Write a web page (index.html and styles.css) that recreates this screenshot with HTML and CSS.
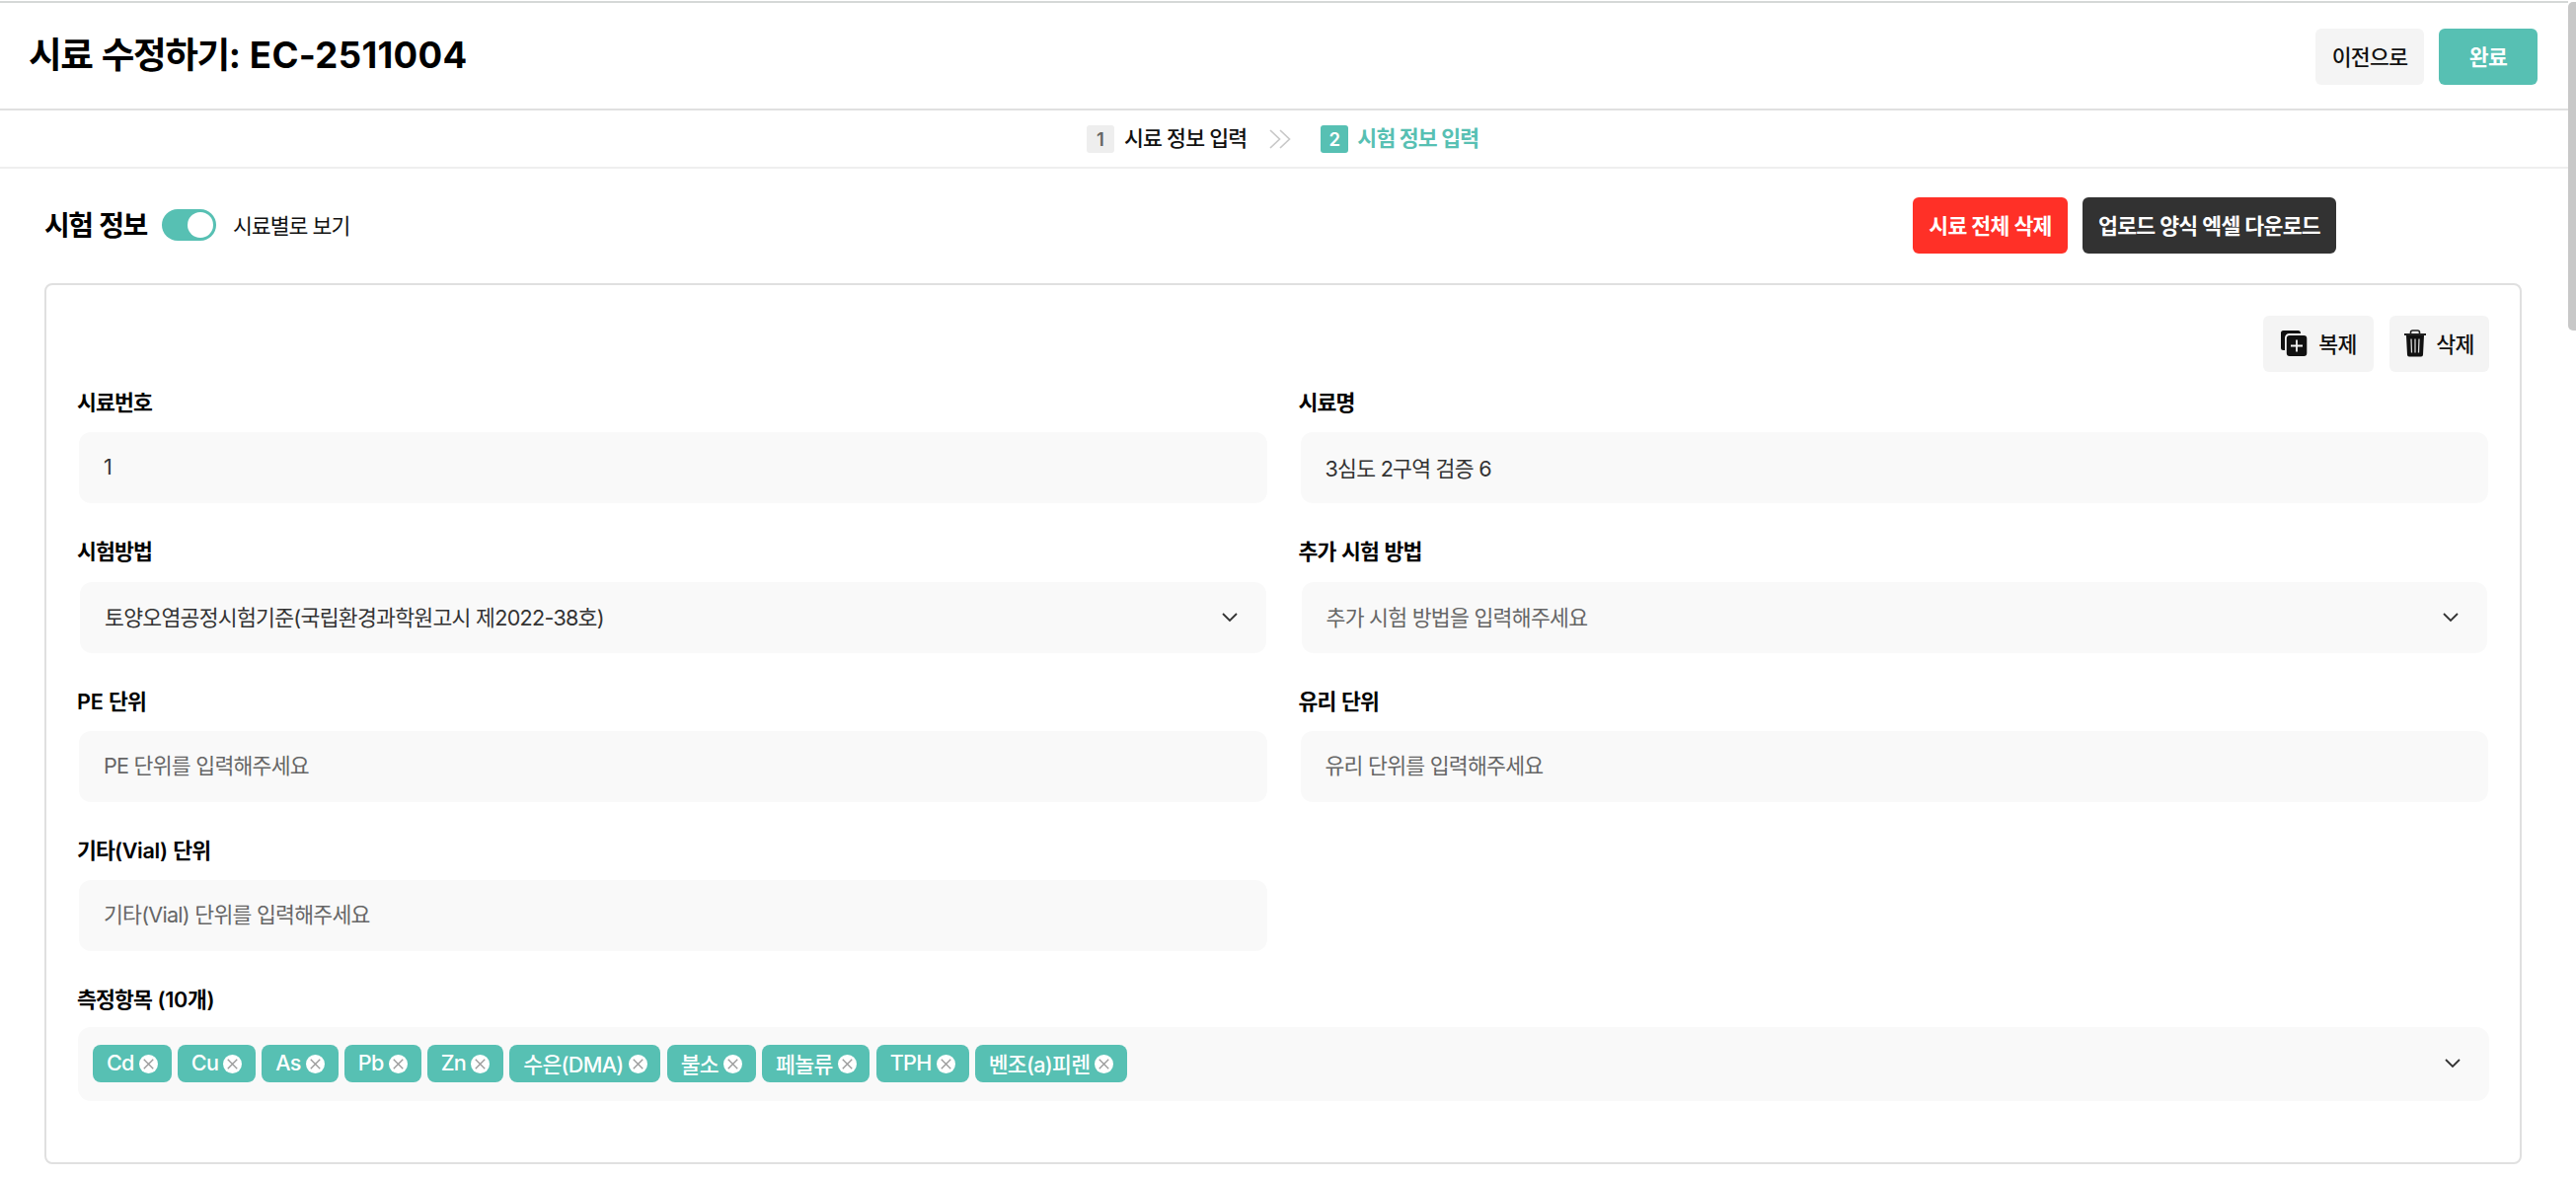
FILE: index.html
```html
<!DOCTYPE html>
<html lang="ko">
<head>
    <meta charset="UTF-8">
    <meta name="viewport" content="width=device-width, initial-scale=1.0">
    <title>시료 수정하기</title>
    <link rel="stylesheet" href="styles.css">
</head>
<body>
    <header class="page-header">
        <h1>시료 수정하기: <span class="code">EC-2511004</span></h1>
        <div class="header-buttons">
            <button class="btn btn-light btn-prev">이전으로</button>
            <button class="btn btn-primary btn-done">완료</button>
        </div>
    </header>

    <nav class="steps">
        <div class="step">
            <span class="step-number">1</span>
            <span>시료 정보 입력</span>
        </div>
        <svg class="step-arrow" viewBox="0 0 22 20" fill="none" stroke="#c8c8c8" stroke-width="1.7">
            <path d="M1 1l9.5 9L1 19M11 1l9.5 9-9.5 9"/>
        </svg>
        <div class="step active">
            <span class="step-number">2</span>
            <span>시험 정보 입력</span>
        </div>
    </nav>

    <main>
        <div class="toolbar">
            <h2>시험 정보</h2>
            <span class="toggle"><span class="knob"></span></span>
            <span class="toggle-label">시료별로 보기</span>
            <div class="toolbar-buttons">
                <button class="btn btn-danger">시료 전체 삭제</button>
                <button class="btn btn-dark">업로드 양식 엑셀 다운로드</button>
            </div>
        </div>

        <section class="card">
            <div class="card-buttons">
                <button class="btn btn-light btn-copy">
                    <svg class="icon-copy" viewBox="0 0 28 28">
                        <path d="M3.5 1h15A2.500 2.500 0 0 1 21 3.500V4H9.500A4.500 4.500 0 0 0 5 8.500V21H3.500A2.500 2.500 0 0 1 1 18.500V3.500A2.500 2.500 0 0 1 3.500 1z" fill="#111"/>
                        <rect x="6.800" y="6" width="20.500" height="21" rx="3" fill="#111"/>
                        <path d="M17 10.500v12M11 16.500h12" stroke="#f4f4f4" stroke-width="1.800"/>
                    </svg>
                    복제
                </button>
                <button class="btn btn-light btn-delete">
                    <svg class="icon-trash" viewBox="0 0 22 28" fill="none">
                        <path d="M6.500 4.500V3a2 2 0 0 1 2-2h5a2 2 0 0 1 2 2v1.500" stroke="#222" stroke-width="1.600"/>
                        <path d="M0 4h22v2H0z" fill="#222"/>
                        <path d="M2 6h18l-1 19.500a2 2 0 0 1-2 2H5a2 2 0 0 1-2-2z" fill="#111"/>
                        <path d="M7 9.500l.5 14M11 9.500v14M15 9.500l-.5 14" stroke="#d8d8d8" stroke-width="1.300"/>
                    </svg>
                    삭제
                </button>
            </div>

            <div class="form-grid">
                <div class="field">
                    <label>시료번호</label>
                    <input type="text" value="1">
                </div>
                <div class="field">
                    <label>시료명</label>
                    <input type="text" value="3심도 2구역 검증 6">
                </div>
                <div class="field select-field">
                    <label>시험방법</label>
                    <div class="select">
                        <span>토양오염공정시험기준(국립환경과학원고시 제2022-38호)</span>
                        <svg class="chevron" viewBox="0 0 16 10"><path d="M1 1l7 7 7-7"/></svg>
                    </div>
                </div>
                <div class="field select-field">
                    <label>추가 시험 방법</label>
                    <div class="select">
                        <span class="placeholder">추가 시험 방법을 입력해주세요</span>
                        <svg class="chevron" viewBox="0 0 16 10"><path d="M1 1l7 7 7-7"/></svg>
                    </div>
                </div>
                <div class="field">
                    <label><span class="latin">PE</span> 단위</label>
                    <input type="text" placeholder="PE 단위를 입력해주세요">
                </div>
                <div class="field">
                    <label>유리 단위</label>
                    <input type="text" placeholder="유리 단위를 입력해주세요">
                </div>
                <div class="field">
                    <label>기타<span class="latin">(Vial)</span> 단위</label>
                    <input type="text" placeholder="기타(Vial) 단위를 입력해주세요">
                </div>
                <div class="field tags-field">
                    <label>측정항목 <span class="latin">(10개)</span></label>
                    <div class="tags-box">
                        <div class="tags" id="tags"></div>
                        <svg class="chevron" viewBox="0 0 16 10"><path d="M1 1l7 7 7-7"/></svg>
                    </div>
                </div>
            </div>
        </section>
    </main>

    <div class="scrollbar"></div>

    <script>
        const items = ['Cd', 'Cu', 'As', 'Pb', 'Zn', '수은(DMA)', '불소', '페놀류', 'TPH', '벤조(a)피렌'];

        // Render selected items as removable tags
        const tags = document.getElementById('tags');
        items.forEach(item => {
            const tag = document.createElement('span');
            tag.className = 'tag';
            tag.innerHTML = `
                <span>${item}</span>
                <svg class="remove" viewBox="0 0 20 20">
                    <circle cx="10" cy="10" r="10" fill="#fff"/>
                    <path d="M5 5l10 10M15 5L5 15" stroke="#999" stroke-width="1.400"/>
                </svg>
            `;
            tags.appendChild(tag);
        });
    </script>
</body>
</html>
```

FILE: styles.css
```css
:root {
    --primary-color: #57c0b3;
    --danger-color: #ff3027;
    --dark-color: #323232;
    --light-color: #f4f4f4;
    --input-color: #f9f9f9;
    --border-color: #e0e0e0;
}

* {
    margin: 0;
    padding: 0;
    box-sizing: border-box;
    font-family: Inter, "Noto Sans CJK KR", sans-serif;
}

body {
    height: 1194px;
    padding-right: 8px;
    overflow: hidden;
    background-color: #fff;
    color: #111;
    font-size: 21.6px;
    letter-spacing: -0.7px;
    border-top: 1px solid #fff;
}

.page-header {
    display: flex;
    justify-content: space-between;
    height: 111px;
    padding: 26px 31px 0 29px;
    border-top: 2px solid #d5d8d7;
    border-bottom: 2px solid var(--border-color);
}

h1 {
    font-size: 36.6px;
    font-weight: 700;
    line-height: 54px;
    letter-spacing: -1.4px;
    word-spacing: 2px;
    color: #000;
}

h1 .code {
    margin-left: 1px;
    letter-spacing: 0.3px;
}

.header-buttons {
    display: flex;
    gap: 15px;
}

.btn {
    display: flex;
    align-items: center;
    justify-content: center;
    height: 57px;
    padding-bottom: 2px;
    border: none;
    border-radius: 6px;
    font-size: 21.6px;
    font-weight: 500;
    letter-spacing: -0.7px;
    white-space: nowrap;
    cursor: pointer;
}

.btn-light {
    background-color: var(--light-color);
    color: #111;
}

.btn-primary {
    background-color: var(--primary-color);
    color: #fff;
    font-weight: 600;
}

.btn-danger {
    width: 157px;
    background-color: var(--danger-color);
    color: #fff;
    font-weight: 600;
}

.btn-dark {
    width: 257px;
    background-color: var(--dark-color);
    color: #fff;
    font-weight: 600;
}

.btn-prev {
    width: 110px;
}

.btn-done {
    width: 100px;
}

.steps {
    display: flex;
    align-items: center;
    height: 59px;
    padding-left: 1101px;
    border-bottom: 2px solid #efefef;
}

.step {
    display: flex;
    align-items: center;
    gap: 10px;
    font-weight: 500;
    line-height: 30px;
    letter-spacing: -0.8px;
}

.step span:last-child {
    padding-bottom: 1px;
}

.step-number {
    width: 28px;
    height: 28px;
    border-radius: 3px;
    background-color: #eee;
    color: #666;
    font-size: 18.5px;
    font-weight: 600;
    line-height: 28px;
    letter-spacing: 0;
    text-align: center;
}

.step.active {
    gap: 9px;
    color: var(--primary-color);
    font-weight: 700;
}

.step.active .step-number {
    background-color: var(--primary-color);
    color: #fff;
}

.step-arrow {
    width: 22px;
    height: 20px;
    margin: 0 30px 0 23px;
}

main {
    padding: 28px 47px 0 45px;
}

.toolbar {
    display: flex;
    align-items: center;
    height: 58px;
}

h2 {
    width: 119px;
    padding-bottom: 2px;
    font-size: 28px;
    font-weight: 700;
    letter-spacing: -1.5px;
    word-spacing: 1.5px;
    white-space: nowrap;
    color: #000;
}

.toggle {
    display: flex;
    justify-content: flex-end;
    width: 55px;
    height: 32px;
    padding: 3px;
    border-radius: 16px;
    background-color: var(--primary-color);
}

.knob {
    width: 26px;
    height: 26px;
    border-radius: 50%;
    background-color: #fff;
}

.toggle-label {
    margin-left: 17px;
    padding-bottom: 2px;
    letter-spacing: -1px;
}

.toolbar-buttons {
    display: flex;
    gap: 15px;
    margin-left: auto;
    margin-right: 188px;
}

.card {
    height: 893px;
    margin-top: 30px;
    padding: 31px 31px 0 32px;
    border: 2px solid var(--border-color);
    border-radius: 8px;
}

.card-buttons {
    display: flex;
    justify-content: flex-end;
    gap: 16px;
}

.btn-copy {
    gap: 11px;
    width: 112px;
}

.btn-delete {
    gap: 10px;
    width: 101px;
}

.icon-copy {
    width: 28px;
    height: 28px;
}

.icon-trash {
    width: 22px;
    height: 28px;
}

.form-grid {
    display: grid;
    grid-template-columns: 1fr 1fr;
    gap: 35.7px 32px;
    margin-top: 18px;
}

.field label {
    display: block;
    height: 26px;
    margin: 0 0 17px -1px;
    font-weight: 600;
    line-height: 26px;
    letter-spacing: -0.9px;
    word-spacing: 1px;
    color: #000;
}

.field label .latin {
    letter-spacing: -0.3px;
}

.field input {
    display: block;
    width: calc(100% - 2px);
    height: 72px;
    margin: 0 1px;
    padding: 0 24px 2px 25px;
    border: none;
    border-radius: 12px;
    background-color: var(--input-color);
    color: #333;
    font-size: 21.6px;
    letter-spacing: -0.75px;
}

.field input::placeholder {
    color: #666;
}

.select-field {
    padding-bottom: 1px;
}

.select-field label {
    margin-bottom: 18px;
}

.select {
    display: flex;
    align-items: center;
    justify-content: space-between;
    height: 72px;
    margin: 0 2px;
    padding: 0 29px 0 25px;
    border-radius: 12px;
    background-color: var(--input-color);
    color: #333;
    letter-spacing: -0.73px;
}

.select span {
    padding-bottom: 3px;
}

.select .placeholder {
    color: #666;
}

.chevron {
    width: 16px;
    height: 10px;
    fill: none;
    stroke: #333;
    stroke-width: 1.8;
}

.tags-field {
    grid-column: 1 / -1;
}

.tags-field label {
    margin-bottom: 15px;
}

.tags-box {
    display: flex;
    align-items: center;
    justify-content: space-between;
    height: 75px;
    padding: 0 29px 0 15px;
    border-radius: 13px;
    background-color: var(--input-color);
}

.tags {
    display: flex;
    gap: 6.3px;
}

.tag {
    display: flex;
    align-items: center;
    gap: 5px;
    height: 38px;
    padding: 0 13.9px;
    border-radius: 8px;
    background-color: var(--primary-color);
    color: #fff;
    font-weight: 500;
    letter-spacing: -0.7px;
}

.tag span {
    padding-bottom: 2px;
}

.remove {
    width: 19px;
    height: 19px;
}

.scrollbar {
    position: fixed;
    top: 2px;
    right: 0;
    width: 8px;
    height: 333px;
    border-radius: 5px 0 0 5px;
    background-color: #c8c8c8;
}
```
